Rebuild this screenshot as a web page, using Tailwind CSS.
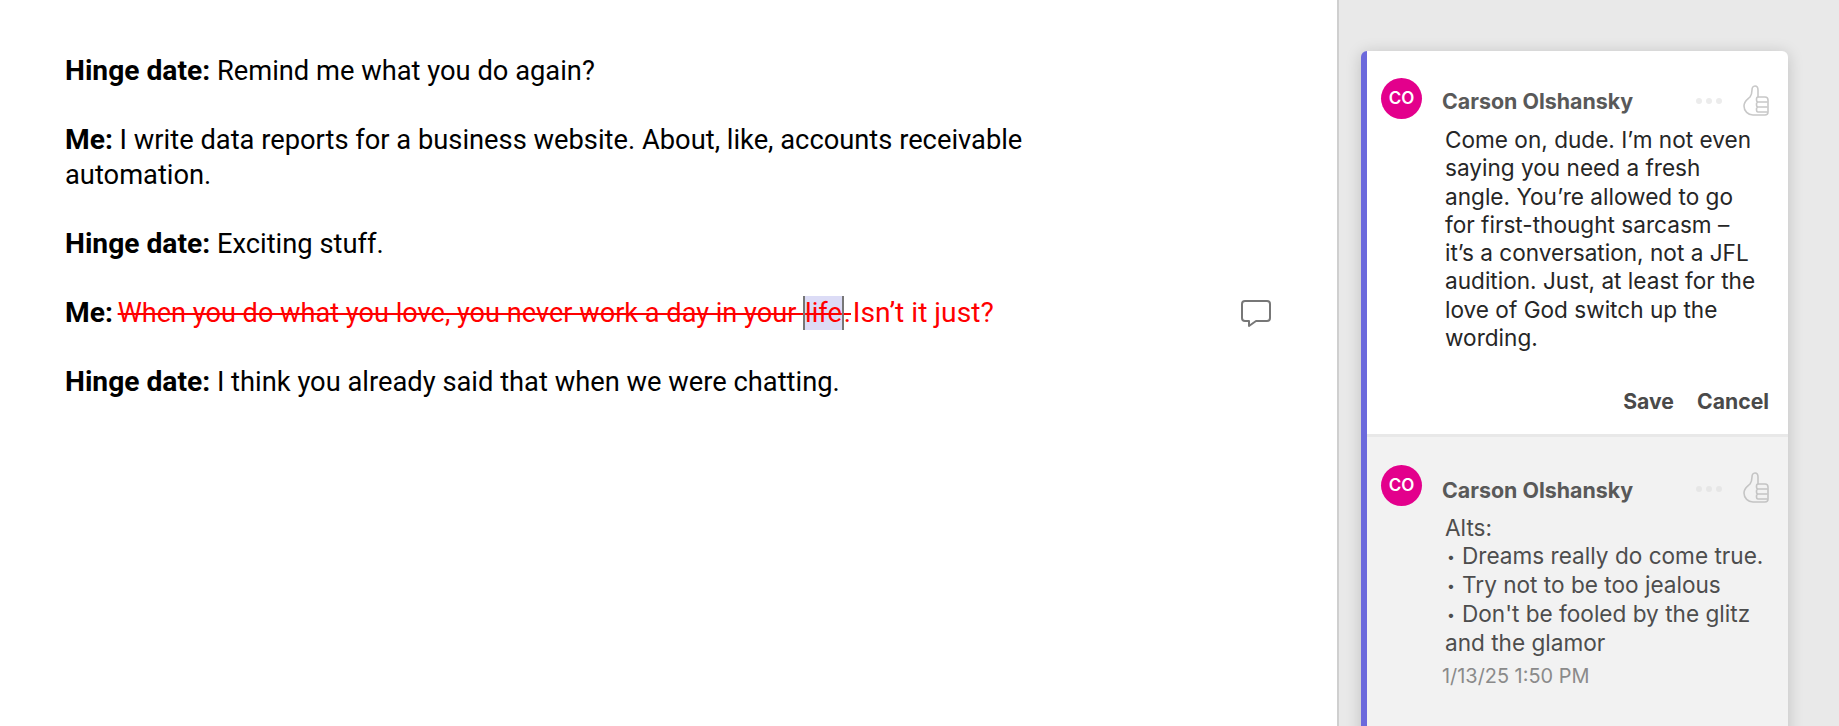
<!DOCTYPE html>
<html lang="en">
<head>
  <meta charset="UTF-8">
  <title>Comment draft</title>
  <script src="https://cdn.jsdelivr.net/npm/@tailwindcss/browser@4"></script>
</head>
<body class="h-[726px] overflow-hidden bg-white">
  <div class="flex h-[726px]">

    <!-- Document -->
    <main class="w-[1337px] shrink-0 pl-[65px] pr-[67px] pt-[54px] font-['Roboto',sans-serif] text-[27.3px] leading-[34.5px] text-black">
      <p class="w-[980px]"><b class="text-[28.2px]">Hinge date:</b> Remind me what you do again?</p>
      <p class="mt-[34.5px] w-[980px]"><b class="text-[28.2px]">Me:</b> I write data reports for a business website. About, like, accounts receivable automation.</p>
      <p class="mt-[34.5px] w-[980px]"><b class="text-[28.2px]">Hinge date:</b> Exciting stuff.</p>
      <div class="mt-[34.5px] flex h-[34.5px] items-center justify-between">
        <p><b class="text-[28.2px]">Me:</b> <span class="text-[#ff0000]"><span class="ml-[-2px] text-[27.15px] line-through decoration-[2px]">When you do what you love, you never work a day in your <span class="border-x-2 border-[#777] bg-[#dcdcf6] py-[1px]">life</span>.</span> <span class="ml-[-5px] text-[28.2px]">Isn’t it just?</span></span></p>
        <svg class="mr-[-2px] mt-[3px]" width="32" height="30" viewBox="0 0 32 30" fill="none" stroke="#777" stroke-width="2" stroke-linejoin="round"><path d="M5 2h22a3 3 0 0 1 3 3v14a3 3 0 0 1-3 3H16l-7 5v-5H5a3 3 0 0 1-3-3V5a3 3 0 0 1 3-3z"/></svg>
      </div>
      <p class="mt-[34.5px] w-[980px]"><b class="text-[28.2px]">Hinge date:</b> I think you already said that when we were chatting.</p>
    </main>

    <!-- Comments pane -->
    <aside class="flex-1 border-l-[2px] border-[#cfcfcf] bg-[#e9e9e9] pl-[22px] pt-[51px] font-['Inter',sans-serif]">
      <div class="h-[700px] w-[427px] overflow-hidden rounded-[6px] border-l-[6px] border-[#6b69dc] bg-white shadow-[0_2px_16px_rgba(0,0,0,0.18)]">

        <section class="h-[383px] pl-[14px] pr-[19px] pt-[27px]">
          <div class="flex">
            <div class="flex h-[41px] w-[41px] shrink-0 items-center justify-center rounded-full bg-[#e3008c] text-[17px] font-semibold text-white">CO</div>
            <div class="ml-[20px] mt-[11px] flex-1 text-[21.4px] leading-[24px] font-bold text-[#595959]">Carson Olshansky</div>
            <div class="mt-[20px] flex gap-[4px]">
              <span class="h-[6px] w-[6px] rounded-full bg-[#ececec]"></span>
              <span class="h-[6px] w-[6px] rounded-full bg-[#ececec]"></span>
              <span class="h-[6px] w-[6px] rounded-full bg-[#ececec]"></span>
            </div>
            <svg class="ml-[21px] mt-[7px]" width="26" height="32" viewBox="0 0 26 32" fill="none" stroke="#c8c8c8" stroke-width="1.6" stroke-linejoin="round" stroke-linecap="round"><path d="M1 21c0-5 3-6 6-9 2-3 2-5 2-7 0-2 1-4 3-4s3 2 3 4v7h7c2 0 3 1 3 3v12c0 2-1 3-3 3H10c-5 0-9-4-9-9z"/><path d="M15 12c-2 0-2 5 0 5h9M15 17c-2 0-2 5 0 5h9M15 22c-2 0-2 5 0 5h9"/></svg>
          </div>
          <p class="ml-[64px] mt-[7px] w-[318px] text-[22.6px] leading-[28.3px] text-[#262626]">Come on, dude. I’m not even saying you need a fresh angle. You’re allowed to go for first-thought sarcasm – it’s a conversation, not a JFL audition. Just, at least for the love of God switch up the wording.</p>
          <div class="mt-[35px] flex justify-end gap-[23px] text-[21.2px] leading-[28px] font-bold text-[#4a4a4a]">
            <span>Save</span>
            <span>Cancel</span>
          </div>
        </section>

        <section class="h-[320px] border-t-[3px] border-[#e8e8e8] bg-[#f2f2f2] pl-[14px] pr-[19px] pt-[28px]">
          <div class="flex">
            <div class="flex h-[41px] w-[41px] shrink-0 items-center justify-center rounded-full bg-[#e3008c] text-[17px] font-semibold text-white">CO</div>
            <div class="ml-[20px] mt-[13px] flex-1 text-[21.4px] leading-[24px] font-bold text-[#595959]">Carson Olshansky</div>
            <div class="mt-[21px] flex gap-[4px]">
              <span class="h-[6px] w-[6px] rounded-full bg-[#e6e6e6]"></span>
              <span class="h-[6px] w-[6px] rounded-full bg-[#e6e6e6]"></span>
              <span class="h-[6px] w-[6px] rounded-full bg-[#e6e6e6]"></span>
            </div>
            <svg class="ml-[21px] mt-[7px]" width="26" height="32" viewBox="0 0 26 32" fill="none" stroke="#c4c4c4" stroke-width="1.6" stroke-linejoin="round" stroke-linecap="round"><path d="M1 21c0-5 3-6 6-9 2-3 2-5 2-7 0-2 1-4 3-4s3 2 3 4v7h7c2 0 3 1 3 3v12c0 2-1 3-3 3H10c-5 0-9-4-9-9z"/><path d="M15 12c-2 0-2 5 0 5h9M15 17c-2 0-2 5 0 5h9M15 22c-2 0-2 5 0 5h9"/></svg>
          </div>
          <p class="ml-[64px] mt-[8px] w-[325px] text-[22.6px] leading-[28px] text-[#4d4d4d]">Alts:<br><span class="inline-block w-[17px] pl-[2px] text-[14px] align-[2px]">•</span>Dreams really do come true.<br><span class="inline-block w-[17px] pl-[2px] text-[14px] align-[2px]">•</span>Try not to be too jealous<br><span class="inline-block w-[17px] pl-[2px] text-[14px] align-[2px]">•</span>Don't be fooled by the glitz and the glamor</p>
          <p class="ml-[61px] mt-[5px] text-[19.9px] leading-[28px] text-[#8a8a8a]">1/13/25 1:50 PM</p>
        </section>

      </div>
    </aside>
  </div>
</body>
</html>
